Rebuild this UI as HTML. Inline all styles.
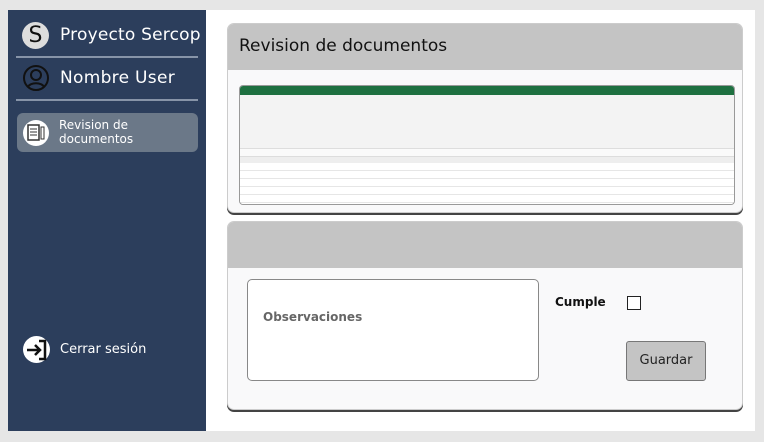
<!DOCTYPE html>
<html><head><meta charset="utf-8"><style>
*{margin:0;padding:0;box-sizing:border-box}
body{width:764px;height:442px;background:#e6e6e6;position:relative;overflow:hidden;font-family:"DejaVu Sans","Liberation Sans",sans-serif}
.side{position:absolute;left:8px;top:10px;width:198px;height:421px;background:#2c3e5c;color:#fff}
.main{position:absolute;left:206px;top:10px;width:549px;height:421px;background:#fff}
.t{position:absolute;color:#fff;white-space:nowrap}
.hr{position:absolute;left:16px;width:182px;height:2px;background:#8794a8}
.card{position:absolute;left:227px;width:516px;background:#f9f9fa;border-radius:7px;box-shadow:0 2px 0 #444;border:1px solid #ccc;overflow:hidden}
.hd{height:46px;background:#c4c4c4}
</style></head><body>
<div class="side">
 <div style="position:absolute;left:14px;top:12px;width:27px;height:27px;border-radius:50%;background:#ddd;color:#111;font-size:22px;text-align:center;line-height:27px">S</div>
 <div class="t" style="left:52px;top:15px;font-size:17px;letter-spacing:0.2px">Proyecto Sercop</div>
 <div class="hr" style="top:46px;left:8px"></div>
 <svg style="position:absolute;left:14px;top:54px" width="28" height="28" viewBox="0 0 28 28"><circle cx="14" cy="14" r="12" fill="none" stroke="#111" stroke-width="2"/><circle cx="14" cy="11" r="5" fill="none" stroke="#111" stroke-width="2"/><path d="M6 23c2-5 14-5 16 0" fill="none" stroke="#111" stroke-width="2"/></svg>
 <div class="t" style="left:52px;top:58px;font-size:17px;letter-spacing:0.3px">Nombre User</div>
 <div class="hr" style="top:89px;left:8px"></div>
 <div style="position:absolute;left:9px;top:103px;width:181px;height:39px;background:#6b7888;border-radius:6px"></div>
 <div style="position:absolute;left:15px;top:110px;width:26px;height:26px;border-radius:50%;background:#fff"></div>
 <svg style="position:absolute;left:18px;top:114px" width="20" height="18" viewBox="0 0 20 18"><rect x="2" y="1" width="11" height="15" fill="none" stroke="#333" stroke-width="1.5"/><path d="M4 5h7M4 8h7M4 11h7" stroke="#333"/><rect x="15" y="3" width="3" height="12" fill="none" stroke="#333"/></svg>
 <div class="t" style="left:51px;top:108px;font-size:12px;line-height:14px">Revision de<br>documentos</div>
 <div style="position:absolute;left:15px;top:326px;width:27px;height:27px;border-radius:50%;background:#fff"></div>
 <svg style="position:absolute;left:16px;top:328px" width="26" height="24" viewBox="0 0 26 24"><path d="M3 12h13M11 7l5 5-5 5" fill="none" stroke="#111" stroke-width="2.5"/><path d="M15 3h6v18h-6" fill="none" stroke="#111" stroke-width="2.5"/></svg>
 <div class="t" style="left:52px;top:332px;font-size:13px">Cerrar sesión</div>
</div>
<div class="main"></div>
<div class="card" style="top:23px;height:190px">
 <div class="hd"><div style="padding:12px 0 0 11px;font-size:17px;color:#111">Revision de documentos</div></div>
 <div style="position:absolute;left:11px;top:61px;width:496px;height:120px;border:1px solid #999;border-radius:4px;background:#fff;overflow:hidden">
  <div style="height:9px;background:#1e7040"></div>
  <div style="height:54px;background:#f3f3f3;border-bottom:1px solid #ddd"></div>
  <div style="height:8px;background:#fafafa;border-bottom:1px solid #ddd"></div>
  <div style="height:6px;background:#eee"></div>
  <div style="height:42px;background:repeating-linear-gradient(#fff 0 7px,#e6e6e6 7px 8px)"></div>
 </div>
</div>
<div class="card" style="top:221px;height:189px">
 <div class="hd"></div>
 <div style="position:absolute;left:19px;top:57px;width:292px;height:102px;background:#fff;border:1px solid #888;border-radius:5px"><div style="position:absolute;left:15px;top:30px;font-size:12px;font-weight:bold;color:#666">Observaciones</div></div>
 <div style="position:absolute;left:327px;top:73px;font-size:12px;font-weight:bold;color:#111">Cumple</div>
 <div style="position:absolute;left:399px;top:74px;width:14px;height:14px;border:1.5px solid #222;background:#fff"></div>
 <div style="position:absolute;left:398px;top:119px;width:80px;height:40px;background:#c4c4c4;border:1px solid #777;border-radius:3px;font-size:13px;color:#222;text-align:center;line-height:38px">Guardar</div>
</div>
</body></html>
